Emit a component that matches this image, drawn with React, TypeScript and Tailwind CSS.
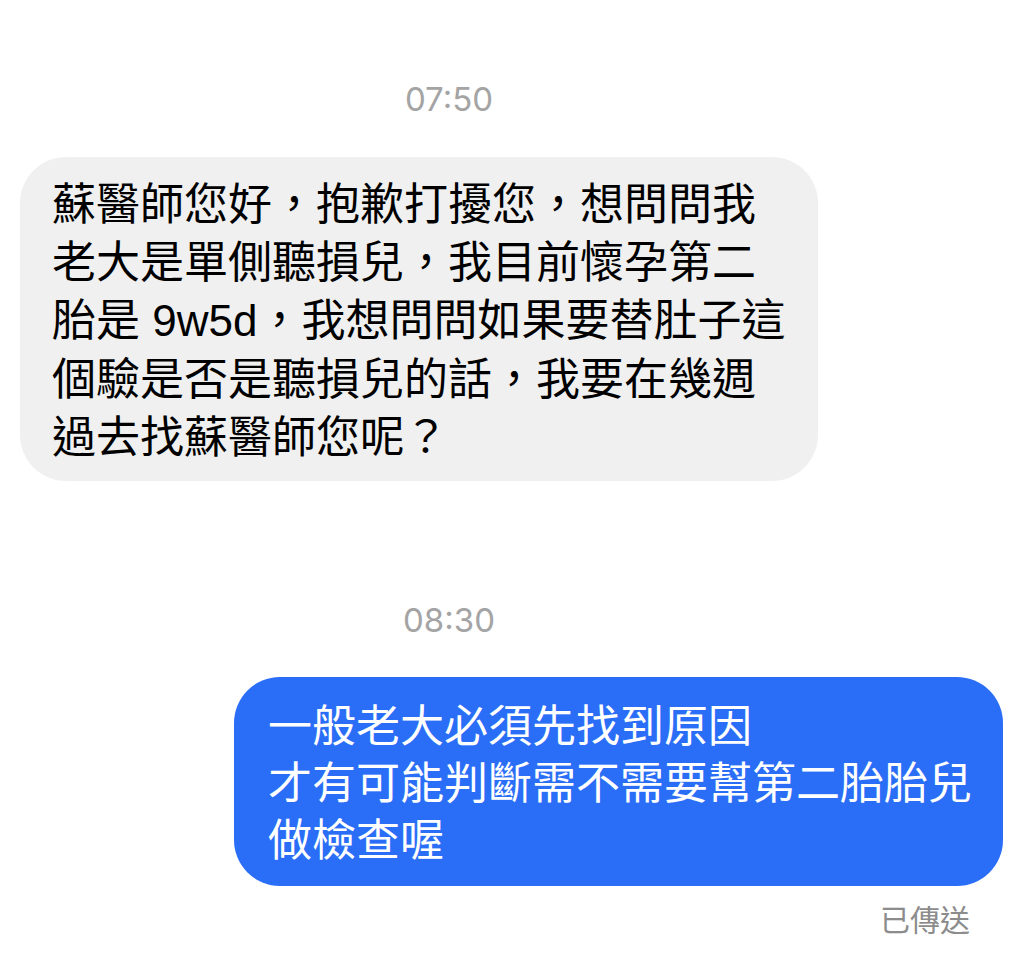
const font = "font-['Inter','Noto_Sans_CJK_TC',sans-serif]";

const incoming = [
  "蘇醫師您好，抱歉打擾您，想問問我",
  "老大是單側聽損兒，我目前懷孕第二",
  null,
  "個驗是否是聽損兒的話，我要在幾週",
  "過去找蘇醫師您呢？",
];

const outgoing = [
  "一般老大必須先找到原因",
  "才有可能判斷需不需要幫第二胎胎兒",
  "做檢查喔",
];

function Stamp({ time }: { time: string }) {
  return (
    <div className="flex w-[898px] justify-center">
      <span className="text-[33px] leading-none text-[#a4a4a4]">{time}</span>
    </div>
  );
}

export default function App() {
  return (
    <div className={`${font} h-[968px] w-[1024px] overflow-hidden bg-white`}>
      <div className="flex flex-col pt-[83px]">
        <Stamp time="07:50" />

        <div className="ml-[20px] mt-[41px] w-[798px] rounded-[46px] bg-[#f0f0f0] pb-[15px] pl-[32px] pr-[20px] pt-[18px] text-[44px] leading-[58px] text-black">
          {incoming.map((line, i) =>
            line ? (
              <div key={i} className="whitespace-nowrap">
                {line}
              </div>
            ) : (
              <div key={i} className="whitespace-nowrap">
                胎是
                <span className="font-['Liberation_Sans','Noto_Sans_CJK_TC',sans-serif]">
                  {" 9w5d"}
                </span>
                ，我想問問如果要替肚子這
              </div>
            )
          )}
        </div>

        <div className="mt-[123px]">
          <Stamp time="08:30" />
        </div>

        <div className="ml-[234px] mt-[40px] w-[769px] rounded-[46px] bg-[#2a6ef7] pb-[17px] pl-[34px] pr-[20px] pt-[21px] text-[44px] leading-[57px] text-white">
          {outgoing.map((line) => (
            <div key={line} className="whitespace-nowrap">
              {line}
            </div>
          ))}
        </div>

        <div className="mr-[54px] mt-[14px] self-end text-[30px] leading-[40px] text-[#8c8c8c]">
          已傳送
        </div>
      </div>
    </div>
  );
}
